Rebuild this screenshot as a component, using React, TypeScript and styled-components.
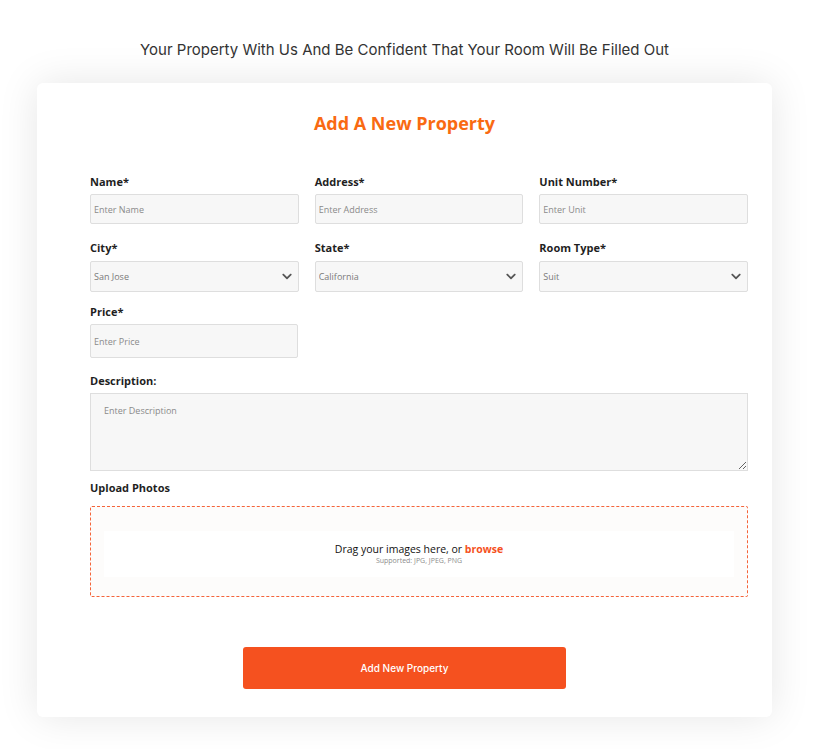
import React from 'react';
import styled, { createGlobalStyle } from 'styled-components';
import { FaChevronDown } from 'react-icons/fa';

const GlobalStyle = createGlobalStyle`
    body {
        margin: 0;
        background: #ffffff;
        font-family: 'Open Sans', 'Liberation Sans', sans-serif;
    }
    * {
        box-sizing: border-box;
    }
`;

const Page = styled.div`
    width: 735px;
    margin-left: 37px;
    padding-top: 40px;
    padding-bottom: 32px;
`;

const Intro = styled.p`
    margin: 0 0 23px;
    text-align: center;
    font-family: Inter, Roboto, 'Liberation Sans', sans-serif;
    font-size: 15px;
    line-height: 20px;
    color: #333333;
`;

const Card = styled.div`
    background: #ffffff;
    border-radius: 6px;
    box-shadow: 0 0 40px rgba(0, 0, 0, 0.1);
    padding: 28px 24px 28px 53px;
`;

const Title = styled.h2`
    margin: 0 0 39px;
    padding-right: 29px;
    text-align: center;
    font-size: 18px;
    line-height: 24px;
    font-weight: 700;
    color: #f96a12;
`;

const FieldGrid = styled.div`
    display: grid;
    grid-template-columns: repeat(3, 1fr);
    column-gap: 16px;
    width: 658px;
`;

const Field = styled.div<{ $gap: number; $full?: boolean }>`
    display: flex;
    flex-direction: column;
    margin-bottom: ${props => props.$gap}px;
    grid-column: ${props => (props.$full ? '1 / -1' : 'auto')};
`;

const PriceField = styled.div`
    width: 208px;
    display: flex;
    flex-direction: column;
`;

const Label = styled.label<{ $gap?: number }>`
    font-size: 11px;
    line-height: 16px;
    font-weight: 700;
    color: #1f1f1f;
    margin-bottom: ${props => props.$gap ?? 4}px;
`;

const Input = styled.input<{ $height: number }>`
    height: ${props => props.$height}px;
    width: 100%;
    border: 1px solid #dedede;
    border-radius: 2px;
    background: #f7f7f7;
    padding: 0 3px;
    font-family: inherit;
    font-size: 9px;
    color: #555555;
    outline: none;
    &::placeholder {
        color: #8a8a8a;
    }
`;

const SelectWrapper = styled.div`
    position: relative;
`;

const Select = styled.select`
    appearance: none;
    height: 31px;
    width: 100%;
    border: 1px solid #dedede;
    border-radius: 2px;
    background: #f7f7f7;
    padding: 0 3px;
    font-family: inherit;
    font-size: 9px;
    color: #7a7a7a;
    outline: none;
`;

const Chevron = styled(FaChevronDown)`
    position: absolute;
    right: 5px;
    top: 10px;
    width: 14px;
    height: 11px;
    color: #555555;
    pointer-events: none;
`;

const TextArea = styled.textarea`
    height: 78px;
    width: 100%;
    border: 1px solid #dedede;
    border-radius: 0;
    background: #f7f7f7;
    padding: 10px 13px;
    font-family: inherit;
    font-size: 9px;
    color: #555555;
    outline: none;
    &::placeholder {
        color: #8a8a8a;
    }
`;

const DropZone = styled.div`
    width: 658px;
    height: 91px;
    border: 1px dashed #f5643a;
    border-radius: 2px;
    background: #fdfcfb;
    padding: 24px 13px 19px;
`;

const DropInner = styled.div`
    height: 46px;
    background: #ffffff;
    display: flex;
    flex-direction: column;
    align-items: center;
    justify-content: center;
`;

const DropText = styled.div`
    font-size: 10.5px;
    line-height: 13px;
    color: #111111;
`;

const Browse = styled.span`
    color: #f5511e;
    font-weight: 700;
`;

const Supported = styled.div`
    font-size: 7px;
    line-height: 9px;
    color: #8c8c8c;
`;

/* spans the full card width so the button sits in the card's centre */
const ButtonRow = styled.div`
    display: flex;
    justify-content: center;
    margin: 50px -24px 0 -53px;
`;

const SubmitButton = styled.button`
    width: 323px;
    height: 42px;
    border: none;
    border-radius: 3px;
    background: #f5511f;
    color: #ffffff;
    font-family: Inter, 'Liberation Sans', sans-serif;
    font-size: 10px;
    font-weight: 500;
    cursor: pointer;
`;

const App = () => (
    <Page>
        <GlobalStyle />
        <Intro>Your Property With Us And Be Confident That Your Room Will Be Filled Out</Intro>
        <Card>
            <Title>Add A New Property</Title>
            <FieldGrid>
                <Field $gap={16}>
                    <Label>Name*</Label>
                    <Input $height={30} placeholder="Enter Name" />
                </Field>
                <Field $gap={16}>
                    <Label>Address*</Label>
                    <Input $height={30} placeholder="Enter Address" />
                </Field>
                <Field $gap={16}>
                    <Label>Unit Number*</Label>
                    <Input $height={30} placeholder="Enter Unit" />
                </Field>

                <Field $gap={12}>
                    <Label $gap={5}>City*</Label>
                    <SelectWrapper>
                        <Select defaultValue="San Jose">
                            <option>San Jose</option>
                        </Select>
                        <Chevron />
                    </SelectWrapper>
                </Field>
                <Field $gap={12}>
                    <Label $gap={5}>State*</Label>
                    <SelectWrapper>
                        <Select defaultValue="California">
                            <option>California</option>
                        </Select>
                        <Chevron />
                    </SelectWrapper>
                </Field>
                <Field $gap={12}>
                    <Label $gap={5}>Room Type*</Label>
                    <SelectWrapper>
                        <Select defaultValue="Suit">
                            <option>Suit</option>
                        </Select>
                        <Chevron />
                    </SelectWrapper>
                </Field>

                <Field $gap={15} $full>
                    <PriceField>
                        <Label>Price*</Label>
                        <Input $height={34} placeholder="Enter Price" />
                    </PriceField>
                </Field>

                <Field $gap={9} $full>
                    <Label>Description:</Label>
                    <TextArea placeholder="Enter Description" />
                </Field>
            </FieldGrid>

            <Label as="div" $gap={10}>Upload Photos</Label>
            <DropZone>
                <DropInner>
                    <DropText>
                        Drag your images here, or <Browse>browse</Browse>
                    </DropText>
                    <Supported>Supported: JPG, JPEG, PNG</Supported>
                </DropInner>
            </DropZone>

            <ButtonRow>
                <SubmitButton>Add New Property</SubmitButton>
            </ButtonRow>
        </Card>
    </Page>
);

export default App;
